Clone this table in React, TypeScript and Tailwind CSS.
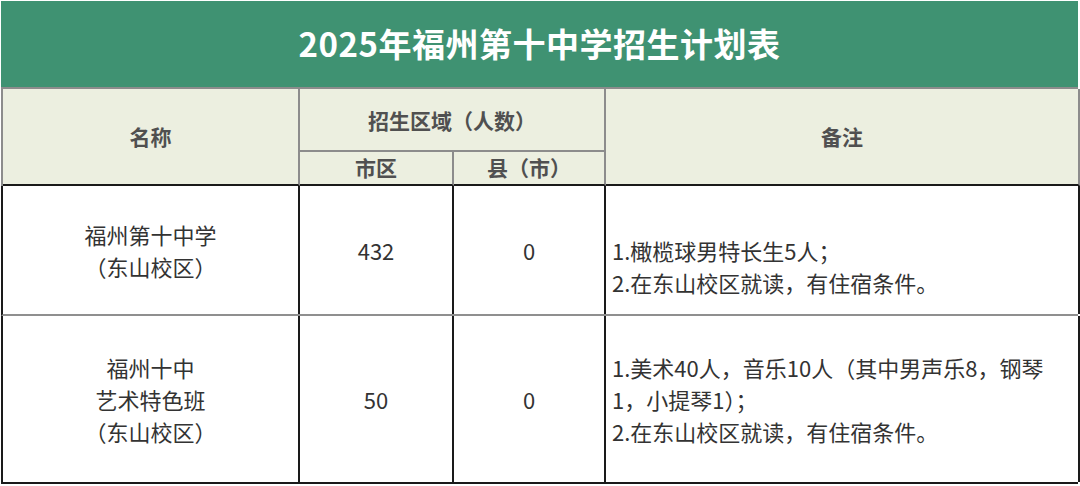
import type React from 'react'

const font = { fontFamily: '"Noto Sans CJK SC", "Noto Sans", sans-serif' }

function HeaderCell({ className = '', children }: { className?: string; children: React.ReactNode }) {
  return (
    <div
      className={`flex items-center justify-center border-r-2 border-[#8c8c8c] text-[21px] font-bold text-[#505050] ${className}`}
    >
      {children}
    </div>
  )
}

function BodyCell({ className = '', children }: { className?: string; children: React.ReactNode }) {
  return (
    <div className={`flex items-center border-r-2 border-[#1a1a1a] text-[22px] leading-[32px] text-[#333333] ${className}`}>
      {children}
    </div>
  )
}

const rows = [
  {
    name: ['福州第十中学', '（东山校区）'],
    city: '432',
    county: '0',
    note: ['1.橄榄球男特长生5人；', '2.在东山校区就读，有住宿条件。'],
    noteClass: 'pt-[31px]',
    height: 'h-[130px]',
    divider: 'border-b-2 border-[#8f8f8f]'
  },
  {
    name: ['福州十中', '艺术特色班', '（东山校区）'],
    city: '50',
    county: '0',
    note: ['1.美术40人，音乐10人（其中男声乐8，钢琴', '1，小提琴1）；', '2.在东山校区就读，有住宿条件。'],
    noteClass: '',
    height: 'h-[168px]',
    divider: 'border-b-2 border-[#1a1a1a]'
  }
]

export default function App(): React.JSX.Element {
  return (
    <div className="h-[486px] w-[1080px] bg-white pl-[1px] pt-[1px]" style={font}>
      <div className="w-[1077px]">
        <div className="flex h-[86px] items-center justify-center bg-[#3f9272] text-[33px] font-bold tracking-[0.5px] text-white">
          2025年福州第十中学招生计划表
        </div>

        <div className="grid grid-cols-[297px_154px_152px_474px] grid-rows-[63px_34px] border-l-2 border-t-2 border-[#8c8c8c] bg-[#ecefe0]">
          <HeaderCell className="row-span-2 border-b-2 border-b-[#1a1a1a]">名称</HeaderCell>
          <HeaderCell className="col-span-2 border-b-2 pt-[2px]">招生区域（人数）</HeaderCell>
          <HeaderCell className="row-span-2 border-b-2 border-b-[#1a1a1a]">备注</HeaderCell>
          <HeaderCell className="border-b-2 border-b-[#1a1a1a]">市区</HeaderCell>
          <HeaderCell className="border-b-2 border-b-[#1a1a1a]">县（市）</HeaderCell>
        </div>

        {rows.map((r) => (
          <div
            key={r.city}
            className={`grid grid-cols-[297px_154px_152px_474px] border-l-2 border-l-[#1a1a1a] ${r.height} ${r.divider}`}
          >
            <BodyCell className="flex-col justify-center">
              {r.name.map((n) => (
                <div key={n}>{n}</div>
              ))}
            </BodyCell>
            <BodyCell className="justify-center">{r.city}</BodyCell>
            <BodyCell className="justify-center">{r.county}</BodyCell>
            <BodyCell className={`pl-[6px] ${r.noteClass}`}>
              <div>
                {r.note.map((n) => (
                  <div key={n}>{n}</div>
                ))}
              </div>
            </BodyCell>
          </div>
        ))}
      </div>
    </div>
  )
}
